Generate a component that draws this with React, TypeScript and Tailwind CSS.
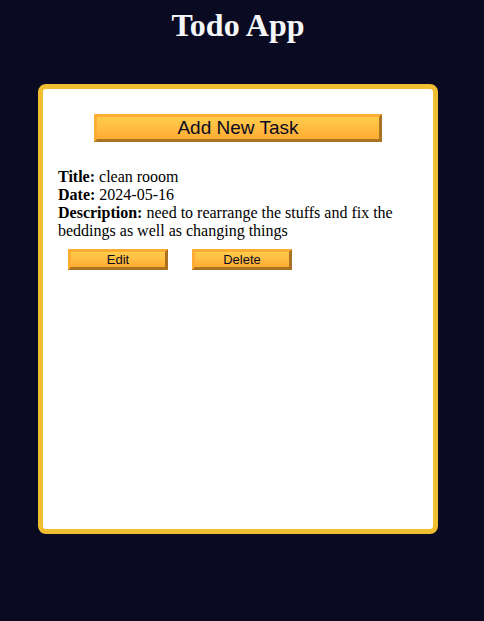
import type { ButtonHTMLAttributes } from "react";
import clsx from "clsx";

interface Task {
  id: number;
  title: string;
  date: string;
  description: string;
}

const tasks: Task[] = [
  {
    id: 1,
    title: "clean rooom",
    date: "2024-05-16",
    description:
      "need to rearrange the stuffs and fix the beddings as well as changing things",
  },
];

function GoldButton({ className, ...props }: ButtonHTMLAttributes<HTMLButtonElement>) {
  return (
    <button
      type="button"
      className={clsx(
        "flex cursor-pointer items-center justify-center border-3 border-[#feac32] bg-linear-to-b from-[#fecc4c] to-[#ffac33] font-['Liberation_Sans',Arial,sans-serif] text-[#0a0a23] [border-style:outset]",
        className,
      )}
      {...props}
    />
  );
}

function TaskItem({ task }: { task: Task }) {
  return (
    <article>
      <p>
        <strong>Title:</strong> {task.title}
      </p>
      <p>
        <strong>Date:</strong> {task.date}
      </p>
      <p>
        <strong>Description:</strong> {task.description}
      </p>
      <div className="mx-2.5 mt-[9px] flex gap-6">
        <GoldButton className="w-25 text-[13px] leading-[15px]">Edit</GoldButton>
        <GoldButton className="w-25 text-[13px] leading-[15px]">Delete</GoldButton>
      </div>
    </article>
  );
}

export default function App() {
  return (
    <main className="flex min-h-screen flex-col items-center bg-[#0a0a23] pt-2 pr-2 pb-8 font-['Liberation_Serif','Times_New_Roman',serif]">
      <h1 className="text-[32px] leading-[34px] font-bold text-[#f5f6f7]">Todo App</h1>
      <section className="mt-[42px] min-h-[450px] w-full max-w-100 rounded-lg border-5 border-[#f1be32] bg-white px-[15px] py-[25px] text-base leading-[18px] text-black">
        <GoldButton className="mx-auto mb-[26px] w-4/5 text-[19px] leading-[22px]">
          Add New Task
        </GoldButton>
        {tasks.map((task) => (
          <TaskItem key={task.id} task={task} />
        ))}
      </section>
    </main>
  );
}
